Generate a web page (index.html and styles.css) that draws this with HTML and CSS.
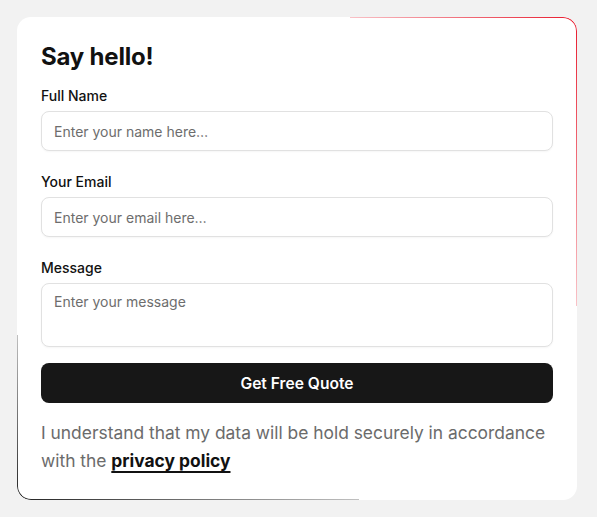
FILE: index.html
```html
<!DOCTYPE html>
<html lang="en">
<head>
<meta charset="utf-8">
<title>Say hello!</title>
<link rel="stylesheet" href="styles.css">
</head>
<body>
<main class="page">
  <section class="card">
    <h1 class="title">Say hello!</h1>
    <form class="form">
      <div class="field">
        <label class="label" for="name">Full Name</label>
        <input class="input" id="name" type="text" placeholder="Enter your name here…">
      </div>
      <div class="field">
        <label class="label" for="email">Your Email</label>
        <input class="input" id="email" type="email" placeholder="Enter your email here…">
      </div>
      <div class="field field-last">
        <label class="label" for="msg">Message</label>
        <textarea class="input textarea" id="msg" placeholder="Enter your message"></textarea>
      </div>
      <button class="button" type="button">Get Free Quote</button>
    </form>
    <p class="note">I understand that my data will be hold securely in accordance with the <a class="link" href="#">privacy policy</a></p>
  </section>
</main>
</body>
</html>
```

FILE: styles.css
```css
* { box-sizing: border-box; }

html, body {
  margin: 0;
  padding: 0;
  background: #f2f2f2;
}

body {
  font-family: Inter, "Liberation Sans", sans-serif;
  color: #111;
}

.page {
  padding: 17px;
}

.card {
  position: relative;
  width: 560px;
  background: #fff;
  border-radius: 14px;
  padding: 24px 24px 25px;
}

.card::before {
  content: "";
  position: absolute;
  top: 0;
  right: 0;
  width: 226px;
  height: 288px;
  border-top: 1px solid #e8192c;
  border-right: 1px solid #e8192c;
  border-top-right-radius: 14px;
  -webkit-mask-image: linear-gradient(to bottom left, #000 0%, transparent 68%);
  mask-image: linear-gradient(to bottom left, #000 0%, transparent 68%);
  pointer-events: none;
}

.card::after {
  content: "";
  position: absolute;
  left: 0;
  bottom: 0;
  width: 341px;
  height: 164px;
  border-bottom: 1px solid #222;
  border-left: 1px solid #222;
  border-bottom-left-radius: 14px;
  -webkit-mask-image: linear-gradient(to top right, #000 0%, transparent 70%);
  mask-image: linear-gradient(to top right, #000 0%, transparent 70%);
  pointer-events: none;
}

.title {
  margin: 0 0 13px;
  font-size: 24px;
  line-height: 32px;
  font-weight: 700;
  letter-spacing: -0.2px;
  color: #111;
}

.form {
  display: flex;
  flex-direction: column;
}

.field {
  display: flex;
  flex-direction: column;
  gap: 5px;
  margin-bottom: 21px;
}

.field-last {
  margin-bottom: 16px;
}

.label {
  font-size: 14px;
  line-height: 20px;
  font-weight: 500;
  color: #111;
}

.input {
  display: block;
  width: 100%;
  height: 40px;
  padding: 0 12px;
  border: 1px solid #e1e1e1;
  border-radius: 8px;
  background: #fff;
  font-family: inherit;
  font-size: 14px;
  color: #111;
  box-shadow: 0 1px 2px rgba(0, 0, 0, 0.04);
  outline: none;
}

.input::placeholder {
  color: #6d6d6d;
}

.textarea {
  height: 64px;
  padding: 9px 12px;
  resize: none;
  line-height: normal;
}

.button {
  height: 40px;
  border: 0;
  border-radius: 8px;
  background: #171717;
  color: #fff;
  font-family: inherit;
  font-size: 15.6px;
  font-weight: 600;
  cursor: pointer;
}

.note {
  margin: 16px 0 0;
  font-size: 17.4px;
  line-height: 28px;
  color: #6b6b6b;
}

.link {
  color: #111;
  font-weight: 700;
  text-decoration: underline;
  text-decoration-thickness: 1.5px;
  text-underline-offset: 4px;
}
```
